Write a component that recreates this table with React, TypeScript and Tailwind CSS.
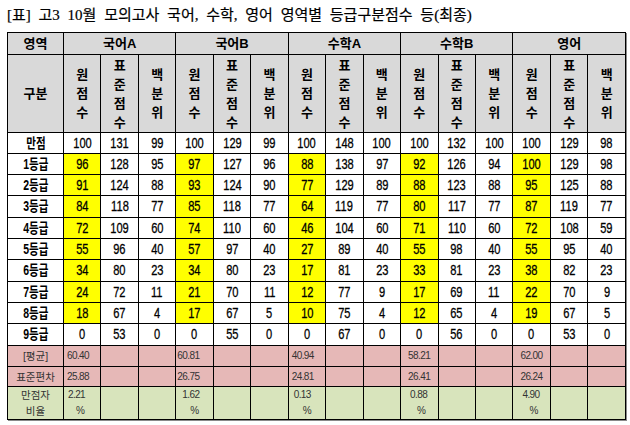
import React from "react";

const groups = ["국어A", "국어B", "수학A", "수학B", "영어"];

const rows: { label: string; vals: number[] }[] = [
  { label: "만점", vals: [100, 131, 99, 100, 129, 99, 100, 148, 100, 100, 132, 100, 100, 129, 98] },
  { label: "1등급", vals: [96, 128, 95, 97, 127, 96, 88, 138, 97, 92, 126, 94, 100, 129, 98] },
  { label: "2등급", vals: [91, 124, 88, 93, 124, 90, 77, 129, 89, 88, 123, 88, 95, 125, 88] },
  { label: "3등급", vals: [84, 118, 77, 85, 118, 77, 64, 119, 77, 80, 117, 77, 87, 119, 77] },
  { label: "4등급", vals: [72, 109, 60, 74, 110, 60, 46, 104, 60, 71, 110, 60, 72, 108, 59] },
  { label: "5등급", vals: [55, 96, 40, 57, 97, 40, 27, 89, 40, 55, 98, 40, 55, 95, 40] },
  { label: "6등급", vals: [34, 80, 23, 34, 80, 23, 17, 81, 23, 33, 81, 23, 38, 82, 23] },
  { label: "7등급", vals: [24, 72, 11, 21, 70, 11, 12, 77, 9, 17, 69, 11, 22, 70, 9] },
  { label: "8등급", vals: [18, 67, 4, 17, 67, 5, 10, 75, 4, 12, 65, 4, 19, 67, 5] },
  { label: "9등급", vals: [0, 53, 0, 0, 55, 0, 0, 67, 0, 0, 56, 0, 0, 53, 0] },
];

const rowH = ["h-[21px]", "h-[21px]", "h-[21px]", "h-[22px]", "h-[21px]", "h-[21px]", "h-[22px]", "h-[21px]", "h-[21px]", "h-[22px]"];

const avg = ["60.40", "60.81", "40.94", "58.21", "62.00"];
const sd = ["25.88", "26.75", "24.81", "26.41", "26.24"];
const full = ["2.21", "1.62", "0.13", "0.88", "4.90"];
const padA = ["pl-[3px]", "pl-[1px]", "pl-[3px]", "pl-[7px]", "pl-[7px]"];
const padF = ["pl-[4px]", "pl-[6px]", "pl-[5px]", "pl-[9px]", "pl-[9px]"];
const padP = ["pl-[12px]", "pl-[14px]", "pl-[14px]", "pl-[16px]", "pl-[16px]"];

const cell = "border border-black p-0 leading-[14px] text-[12px]";
const fontT = { fontFamily: "'Liberation Sans', 'Noto Sans CJK KR', sans-serif" };

function Stack({ chars }: { chars: string[] }) {
  return (
    <div className="flex flex-col items-center text-[13px] font-bold leading-[19px]">
      {chars.map((c, i) => (
        <span key={i}>{c}</span>
      ))}
    </div>
  );
}

export default function App() {
  return (
    <div className="w-[630px] h-[425px] bg-white pl-[7px] overflow-hidden leading-none" style={fontT}>
      <div
        className="h-[32px] text-[15px] leading-[30px] text-black whitespace-nowrap [-webkit-text-stroke:0.2px_black]"
        style={{ fontFamily: "'Liberation Serif', 'Noto Sans CJK KR', serif", wordSpacing: "4px" }}
      >
        [표] 고3 10월 모의고사 국어, 수학, 영어 영역별 등급구분점수 등(최종)
      </div>
      <table className="w-[619px] table-fixed border-collapse border border-[#666] shadow-[1px_1px_0_#8a8a8a] text-black">
        <colgroup>
          <col className="w-[56px]" />
          {Array.from({ length: 15 }).map((_, i) => (
            <col key={i} />
          ))}
        </colgroup>
        <tbody>
          <tr className="h-[22px] bg-[#d9d9d9]">
            <td className={`${cell} text-center !text-[13px] font-bold`}>영역</td>
            {groups.map((g) => (
              <td key={g} colSpan={3} className={`${cell} text-center !text-[13px] font-bold`}>
                {g}
              </td>
            ))}
          </tr>
          <tr className="h-[78px] bg-[#d9d9d9]">
            <td className={`${cell} text-center !text-[13px] font-bold`}>구분</td>
            {groups.map((g) => (
              <React.Fragment key={g}>
                <td className={cell}>
                  <Stack chars={["원", "점", "수"]} />
                </td>
                <td className={cell}>
                  <Stack chars={["표", "준", "점", "수"]} />
                </td>
                <td className={cell}>
                  <Stack chars={["백", "분", "위"]} />
                </td>
              </React.Fragment>
            ))}
          </tr>
          {rows.map((r, ri) => (
            <tr key={r.label} className={`${rowH[ri]} bg-white`}>
              <td className={`${cell} text-center`}>
                <span className="inline-block text-[14px] leading-[14px] font-bold scale-x-[0.75]">{r.label}</span>
              </td>
              {r.vals.map((v, i) => {
                const yellow = i % 3 === 0 && ri >= 1 && ri <= 8;
                return (
                  <td key={i} className={`${cell} text-center ${yellow ? "bg-[#ffff00]" : ""}`}>
                    <span className="inline-block text-[15px] leading-[14px] scale-x-[0.74] [-webkit-text-stroke:0.3px_black]">
                      {v}
                    </span>
                  </td>
                );
              })}
            </tr>
          ))}
          <tr className="h-[21px] bg-[#e6b8b7] text-[#333]">
            <td className={`${cell} text-center !text-[10.5px]`}>[평균]</td>
            {avg.map((a, i) => (
              <React.Fragment key={i}>
                <td className={`${cell} ${padA[i]} text-left !text-[10px] tracking-[-0.6px]`}>{a}</td>
                <td className={cell}></td>
                <td className={cell}></td>
              </React.Fragment>
            ))}
          </tr>
          <tr className="h-[20px] bg-[#e6b8b7] text-[#333]">
            <td className={`${cell} text-center !text-[10.5px]`}>표준편차</td>
            {sd.map((a, i) => (
              <React.Fragment key={i}>
                <td className={`${cell} ${padA[i]} text-left !text-[10px] tracking-[-0.6px]`}>{a}</td>
                <td className={cell}></td>
                <td className={cell}></td>
              </React.Fragment>
            ))}
          </tr>
          <tr className="h-[33px] bg-[#d8e4bc] text-[#333]">
            <td className={`${cell} text-center !text-[10.5px] !leading-[16px]`}>
              <div>만점자</div>
              <div>비율</div>
            </td>
            {full.map((a, i) => (
              <React.Fragment key={i}>
                <td className={`${cell} text-left !text-[10px] !leading-[16px] tracking-[-0.6px]`}>
                  <div className={padF[i]}>{a}</div>
                  <div className={padP[i]}>%</div>
                </td>
                <td className={cell}></td>
                <td className={cell}></td>
              </React.Fragment>
            ))}
          </tr>
        </tbody>
      </table>
    </div>
  );
}
